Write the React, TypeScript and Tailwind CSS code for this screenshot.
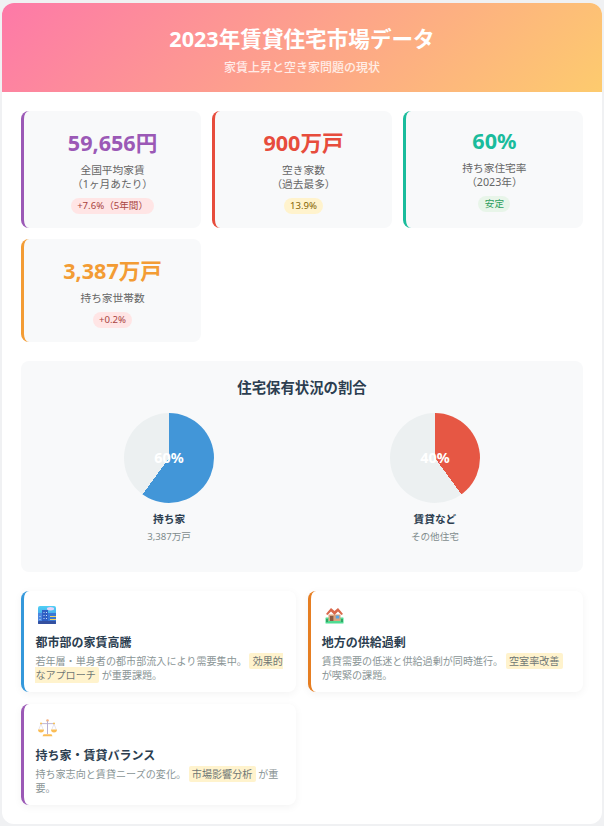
import React from 'react';

const font = "font-['Noto_Sans','Noto_Sans_CJK_JP',sans-serif]";

const CityIcon = () => (
  <svg width="18" height="18" viewBox="0 0 18 18">
    <defs>
      <linearGradient id="sky" x1="0" y1="0" x2="0" y2="1">
        <stop offset="0" stopColor="#4fd0f5" />
        <stop offset="1" stopColor="#3f7fe0" />
      </linearGradient>
    </defs>
    <rect width="18" height="18" rx="2" fill="url(#sky)" />
    <ellipse cx="12.5" cy="2.8" rx="3.6" ry="1.7" fill="#e6d4f7" />
    <rect x="0" y="7" width="4" height="11" fill="#4a86e0" />
    <rect x="4" y="4" width="6" height="14" fill="#2f5fc4" />
    <rect x="10" y="7" width="8" height="11" fill="#3a78d6" />
    <rect x="0" y="15" width="18" height="3" rx="1" fill="#34509f" />
    <path d="M5.5 6h1v1h-1zM8 6h1v1H8zM5.5 9h1v1h-1zM8 9h1v1H8zM5.5 12h1v1h-1zM8 12h1v1H8zM1.5 10h1v1h-1zM1.5 13h1v1h-1z" fill="#c9def5" />
    <path d="M12 10h6v1h-6zM12 13h6v1h-6z" fill="#f2d35e" />
  </svg>
);

const HouseIcon = () => (
  <svg width="19" height="18" viewBox="0 0 19 18">
    <rect x="0.5" y="11.5" width="18" height="6" rx="0.5" fill="#4fdc92" />
    <path d="M3.5 8.5h12V15h-12z" fill="#d8a47f" />
    <path d="M3 5.5 6 2l3.5 3L13 2l3 3.5 2 2.5-1.5 1L13 5.5 9.5 9 6 5.5 2.5 9 1 8z" fill="#d9694c" />
    <path d="M5 10h3.4v5H5z" fill="#8a5a44" />
    <rect x="10.8" y="9.6" width="3.4" height="3" rx="0.6" fill="#56a5e6" />
    <path d="M1 13h2v3H1zM16 13h2v3h-2z" fill="#2fa866" />
  </svg>
);

const ScaleIcon = () => (
  <svg width="19" height="18" viewBox="0 0 19 18">
    <circle cx="9.5" cy="1.5" r="1.3" fill="#f5b183" />
    <path d="M9 2h1v13H9z" fill="#b9afd0" />
    <path d="M3 4.2h13v0.9H3z" fill="#b9afd0" />
    <circle cx="3" cy="4.6" r="1" fill="#f7c04f" />
    <circle cx="16" cy="4.6" r="1" fill="#f7c04f" />
    <path d="M3 5 .8 10.5M3 5l2.2 5.5M16 5l-2.2 5.5M16 5l2.2 5.5" stroke="#cfc8dc" strokeWidth="0.5" fill="none" />
    <path d="M0 10.5h6a3 3 0 0 1-6 0zM13 10.5h6a3 3 0 0 1-6 0z" fill="#fbbd55" />
    <path d="M5.5 15.2h8l1 2h-10z" fill="#fbbd55" />
  </svg>
);

const Stat: React.FC<{
  value: string;
  label: React.ReactNode;
  badge: string;
  border: string;
  color: string;
  badgeStyle: string;
}> = ({ value, label, badge, border, color, badgeStyle }) => (
  <div className={`bg-[#f8f9fa] rounded-lg border-l-[3px] px-[15px] pt-[15px] pb-[13.5px] text-center ${border}`}>
    <div className={`text-[21.6px] leading-[normal] font-bold ${color}`}>{value}</div>
    <div className="mt-[5.5px] text-[10.7px] leading-[14px] text-[#666666]">{label}</div>
    <span className={`inline-block mt-[7px] rounded-xl px-[6.4px] py-[1px] text-[9.6px] leading-[14.5px] ${badgeStyle}`}>
      {badge}
    </span>
  </div>
);

const Pie: React.FC<{ bg: string; pct: string; title: string; sub: string }> = ({ bg, pct, title, sub }) => (
  <div className="flex flex-col items-center">
    <div className={`w-[90px] h-[90px] rounded-full flex items-center justify-center text-white font-bold text-[14.4px] ${bg}`}>
      {pct}
    </div>
    <div className="mt-[9px] text-[10.7px] leading-[14px] font-bold text-[#2c3e50]">{title}</div>
    <div className="mt-[4px] text-[9.6px] leading-[14px] text-[#7f8c8d]">{sub}</div>
  </div>
);

const Mark: React.FC<{ children: React.ReactNode }> = ({ children }) => (
  <span className="bg-[#fff3cd] rounded-[2px] px-[3.2px] py-[1px] text-[#6f7775]">{children}</span>
);

const Insight: React.FC<{ icon: React.ReactNode; title: string; border: string; children: React.ReactNode }> = ({
  icon,
  title,
  border,
  children,
}) => (
  <div className={`bg-white rounded-lg border-l-[3px] px-[11.2px] pt-[11.2px] pb-[10.2px] shadow-[0_2px_8px_rgba(0,0,0,0.05)] ${border}`}>
    <div className="ml-[3px] h-[25px] flex items-center">{icon}</div>
    <div className="mt-[7.8px] text-[12px] leading-[16px] font-bold text-[#2c3e50]">{title}</div>
    <p className="mt-[3px] text-[10.08px] leading-[14px] text-[#8a9596]">{children}</p>
  </div>
);

export default function App() {
  return (
    <div className={`min-h-[826px] bg-[#f0f1f3] pt-[3px] px-[2px] pb-[2px] ${font}`}>
      <div className="w-[600px] h-[821px] bg-white rounded-xl overflow-hidden">
        <header className="h-[89px] bg-[linear-gradient(135deg,#fd79a8,#fdcb6e)] text-center pt-[20px]">
          <h1 className="text-[21.6px] leading-[32px] font-bold text-white">2023年賃貸住宅市場データ</h1>
          <p className="mt-[4.5px] text-[12px] leading-[16px] font-medium text-white/80">家賃上昇と空き家問題の現状</p>
        </header>

        <div className="px-[19.2px] pt-[19.2px]">
          <div className="grid grid-cols-3 gap-[11.2px]">
            <Stat
              value="59,656円"
              label={<>全国平均家賃<br />（1ヶ月あたり）</>}
              badge="+7.6%（5年間）"
              border="border-[#9b59b6]"
              color="text-[#9b59b6]"
              badgeStyle="bg-[#ffe5e5] text-[#a94442]"
            />
            <Stat
              value="900万戸"
              label={<>空き家数<br />（過去最多）</>}
              badge="13.9%"
              border="border-[#e74c3c]"
              color="text-[#e74c3c]"
              badgeStyle="bg-[#fff3cd] text-[#856404]"
            />
            <Stat
              value="60%"
              label={<>持ち家住宅率<br />（2023年）</>}
              badge="安定"
              border="border-[#1abc9c]"
              color="text-[#1abc9c]"
              badgeStyle="bg-[#e8f5e9] text-[#2e9e5e]"
            />
            <Stat
              value="3,387万戸"
              label="持ち家世帯数"
              badge="+0.2%"
              border="border-[#f39c34]"
              color="text-[#f39c34]"
              badgeStyle="bg-[#ffe5e5] text-[#a94442]"
            />
          </div>

          <section className="mt-[18.4px] h-[211px] bg-[#f8f9fa] rounded-lg px-[15px] pt-[17px]">
            <h2 className="text-center text-[14.4px] leading-[20px] font-bold text-[#2c3e50]">住宅保有状況の割合</h2>
            <div className="mt-[15px] grid grid-cols-2">
              <Pie
                bg="bg-[conic-gradient(#4296d8_0deg_216deg,#ecf0f1_216deg_360deg)]"
                pct="60%"
                title="持ち家"
                sub="3,387万戸"
              />
              <Pie
                bg="bg-[conic-gradient(#e65744_0deg_144deg,#ecf0f1_144deg_360deg)]"
                pct="40%"
                title="賃貸など"
                sub="その他住宅"
              />
            </div>
          </section>

          <div className="mt-[19.2px] grid grid-cols-2 gap-x-[11.2px] gap-y-[12px]">
            <Insight icon={<CityIcon />} title="都市部の家賃高騰" border="border-[#3498db]">
              若年層・単身者の都市部流入により需要集中。 <Mark>効果的なアプローチ</Mark> が重要課題。
            </Insight>
            <Insight icon={<HouseIcon />} title="地方の供給過剰" border="border-[#e67e22]">
              賃貸需要の低迷と供給過剰が同時進行。 <Mark>空室率改善</Mark> が喫緊の課題。
            </Insight>
            <Insight icon={<ScaleIcon />} title="持ち家・賃貸バランス" border="border-[#9b59b6]">
              持ち家志向と賃貸ニーズの変化。 <Mark>市場影響分析</Mark> が重要。
            </Insight>
          </div>
        </div>
      </div>
    </div>
  );
}
